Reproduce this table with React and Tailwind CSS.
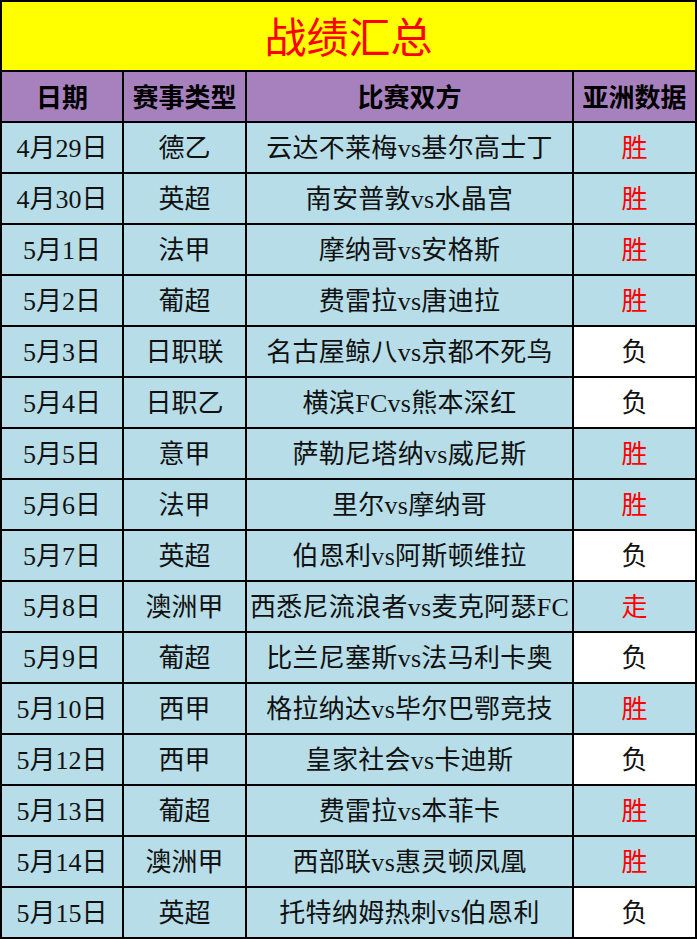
import React from "react";

const rows = [
  ["4月29日", "德乙", "云达不莱梅vs基尔高士丁", "胜"],
  ["4月30日", "英超", "南安普敦vs水晶宫", "胜"],
  ["5月1日", "法甲", "摩纳哥vs安格斯", "胜"],
  ["5月2日", "葡超", "费雷拉vs唐迪拉", "胜"],
  ["5月3日", "日职联", "名古屋鲸八vs京都不死鸟", "负"],
  ["5月4日", "日职乙", "横滨FCvs熊本深红", "负"],
  ["5月5日", "意甲", "萨勒尼塔纳vs威尼斯", "胜"],
  ["5月6日", "法甲", "里尔vs摩纳哥", "胜"],
  ["5月7日", "英超", "伯恩利vs阿斯顿维拉", "负"],
  ["5月8日", "澳洲甲", "西悉尼流浪者vs麦克阿瑟FC", "走"],
  ["5月9日", "葡超", "比兰尼塞斯vs法马利卡奥", "负"],
  ["5月10日", "西甲", "格拉纳达vs毕尔巴鄂竞技", "胜"],
  ["5月12日", "西甲", "皇家社会vs卡迪斯", "负"],
  ["5月13日", "葡超", "费雷拉vs本菲卡", "胜"],
  ["5月14日", "澳洲甲", "西部联vs惠灵顿凤凰", "胜"],
  ["5月15日", "英超", "托特纳姆热刺vs伯恩利", "负"],
];

function App() {
  return (
    <div
      className="w-[697px] h-[939px] bg-black p-[2px] grid grid-cols-[120px_121px_325px_121px] grid-rows-[68px_49px_repeat(16,49px)] gap-[2px] text-[#111]"
      style={{ fontFamily: '"Liberation Serif", "Noto Sans CJK SC", serif' }}
    >
      <div className="col-span-4 bg-[#ffff00] flex items-center justify-center pt-[6px] text-[42px] text-[#ff0000] leading-none">
        战绩汇总
      </div>
      {["日期", "赛事类型", "比赛双方", "亚洲数据"].map((h) => (
        <div key={h} className="bg-[#a781bd] flex items-center justify-center pt-[4px] text-[26px] font-bold text-black leading-none">
          {h}
        </div>
      ))}
      {rows.map((r) => (
        <React.Fragment key={r[0]}>
          <div className="bg-[#b7dee8] flex items-center justify-center pt-[2px] text-[26px] leading-none">{r[0]}</div>
          <div className="bg-[#b7dee8] flex items-center justify-center pt-[2px] text-[26px] leading-none">{r[1]}</div>
          <div className="bg-[#b7dee8] flex items-center justify-center pt-[2px] text-[26px] leading-none whitespace-nowrap overflow-hidden tracking-[0.3px]">{r[2]}</div>
          {r[3] === "负" ? (
            <div className="bg-white flex items-center justify-center pt-[2px] text-[26px] leading-none">{r[3]}</div>
          ) : (
            <div className="bg-[#b7dee8] flex items-center justify-center pt-[2px] text-[26px] leading-none text-[#ff0000]">{r[3]}</div>
          )}
        </React.Fragment>
      ))}
    </div>
  );
}

export default App;
